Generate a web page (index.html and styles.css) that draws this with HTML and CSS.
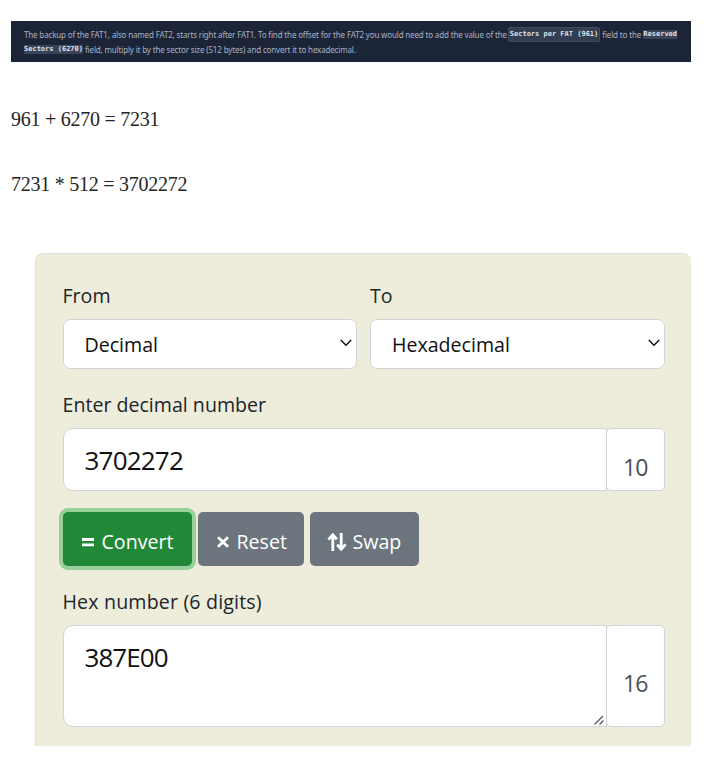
FILE: index.html
```html
<!DOCTYPE html>
<html lang="en">
<head>
<meta charset="utf-8">
<title>FAT2 offset</title>
<link rel="stylesheet" href="styles.css">
</head>
<body>
<main>
  <section class="hint">
    <p><span class="lead">The backup of the FAT1, also named FAT2, starts right after FAT1. To find the offset for the FAT2 you would need to add the value of the</span><code class="chip">Sectors per FAT (961)</code><span class="link">field to the</span><code class="mark">Reserved</code></p>
    <p><code class="mark second">Sectors (6270)</code><span class="tail">field, multiply it by the sector size (512 bytes) and convert it to hexadecimal.</span></p>
  </section>
  <p class="sum">961 + 6270 = 7231</p>
  <p class="sum product">7231 * 512 = 3702272</p>
  <section class="panel">
    <div class="pair">
      <div>
        <div class="label">From</div>
        <div class="select"><span>Decimal</span><svg width="14" height="10" viewBox="0 0 14 10"><path d="M1.8 2 7 7.2 12.2 2"/></svg></div>
      </div>
      <div>
        <div class="label">To</div>
        <div class="select"><span>Hexadecimal</span><svg width="14" height="10" viewBox="0 0 14 10"><path d="M1.8 2 7 7.2 12.2 2"/></svg></div>
      </div>
    </div>
    <div class="label enter">Enter decimal number</div>
    <div class="group">
      <div class="input">3702272</div>
      <div class="base">10</div>
    </div>
    <div class="buttons">
      <div class="btn convert"><svg width="14" height="14" viewBox="0 0 14 14"><path d="M1 4.5h12M1 9.8h12"/></svg><span>Convert</span></div>
      <div class="btn reset"><svg width="14" height="14" viewBox="0 0 14 14"><path d="M2 2.2l10 9.6M12 2.2 2 11.8"/></svg><span>Reset</span></div>
      <div class="btn swap"><svg width="20" height="20" viewBox="0 0 20 20"><path d="M5.8 19V3M1.4 7.6 5.8 2.8 9.8 7.2M14.2 1v16M10.2 12.8l4 4.4 4.4-4.8"/></svg><span>Swap</span></div>
    </div>
    <div class="label hex">Hex number (6 digits)</div>
    <div class="group result">
      <div class="input">387E00<svg class="grip" width="12" height="12" viewBox="0 0 12 12"><path d="M1.5 10.5l8.5-8.5M6.5 10.5l4-4"/></svg></div>
      <div class="base">16</div>
    </div>
  </section>
</main>
</body>
</html>
```
FILE: styles.css
```css
* { box-sizing: border-box; }
body { margin: 0; background: #fff; overflow: hidden; }
main { width: 680px; margin: 21px 0 0 11px; }
p { margin: 0; }
svg { fill: none; stroke: currentColor; flex: none; }
.hint {
  height: 41px;
  padding: 6px 0 0 13px;
  background: #1c2538;
  color: #a9b2c4;
  font: 8px/15px "Noto Sans", sans-serif;
  white-space: nowrap;
}
.hint p { display: flex; height: 15px; align-items: center; }
.hint span { letter-spacing: -.154px; }
.hint .link { letter-spacing: 0; }
.hint code {
  font: bold 7px/9px "DejaVu Sans Mono", monospace;
  color: #dce1ea;
  background: #3a4458;
}
.hint .chip {
  line-height: 13px;
  border: 1px solid #414b5f;
  border-radius: 2px;
  padding: 0 1px;
  margin: 0 2px 0 1px;
  background: #333e52;
}
.hint .link { width: 41px; letter-spacing: -.15px; }
.hint .mark.second { margin-right: 2px; }
.sum {
  margin-top: 42px;
  font: 20px/30px "Liberation Serif", serif;
  color: #242424;
  letter-spacing: -.25px;
}
.product { margin-top: 35px; }
.panel {
  width: 656px;
  height: 493px;
  margin: 54px 0 0 24px;
  padding: 27px 26px 0 26.5px;
  border: solid #dfe1df;
  border-width: 1px 0 0 1px;
  border-radius: 8px 8px 0 0;
  background: #eeeddc;
  color: #212529;
  font: 19.6px/30px "Open Sans", sans-serif;
  white-space: nowrap;
}
.pair { display: grid; grid-template-columns: 294px 295px; gap: 13.5px; }
.label { height: 30px; }
.select {
  display: flex;
  align-items: center;
  justify-content: space-between;
  height: 50px;
  margin-top: 8px;
  padding: 1px 3px 0 21px;
  border: 1px solid #d0d4d8;
  border-radius: 7px;
  background: #fff;
  color: #111;
}
.select svg { stroke-width: 1.5; margin-top: -3px; }
.enter { margin-top: 21px; }
.group { display: flex; width: 602.5px; height: 63px; margin-top: 8px; }
.input {
  display: flex;
  align-items: center;
  position: relative;
  width: 544px;
  padding-left: 21px;
  border: 1px solid #d0d4d8;
  border-radius: 10px 0 0 10px;
  background: #fff;
  color: #111;
  font-size: 26px;
  letter-spacing: -.8px;
}
.base {
  width: 59.5px;
  margin-left: -1px;
  padding: 23px 0 0 16.5px;
  border: 1px solid #d0d4d8;
  border-radius: 5px;
  background: #fff;
  color: #495057;
  font-size: 23px;
  letter-spacing: -.8px;
}
.buttons { display: flex; gap: 6px; height: 54px; margin-top: 21px; color: #fff; }
.btn {
  display: flex;
  align-items: center;
  padding: 5px 0 0 18px;
  gap: 7px;
  border-radius: 5px;
  background: #6c757d;
}
.convert { width: 129px; background: #218838; box-shadow: 0 0 0 4px #98cf9b; }
.reset { width: 106px; }
.swap { width: 109px; padding-left: 17px; gap: 6px; }
.btn svg { stroke-width: 2.8; }
.hex { margin-top: 21px; letter-spacing: .17px; }
.result { height: 102px; }
.result .input { align-items: flex-start; padding-top: 16px; letter-spacing: -.95px; }
.result .base { padding-top: 42px; }
.grip { position: absolute; right: 1px; bottom: 0; color: #555; stroke-width: 1.3; }
```
